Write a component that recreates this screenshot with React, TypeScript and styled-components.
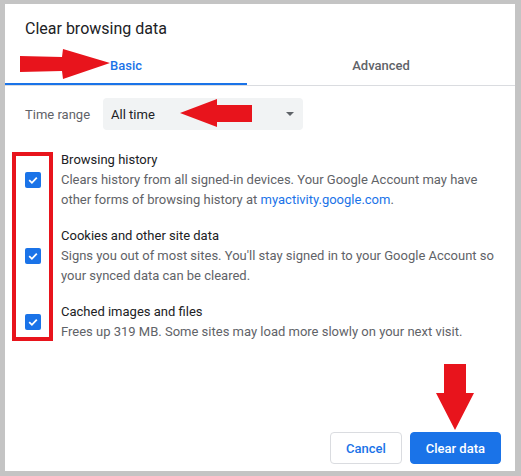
import React from "react";
import styled, { createGlobalStyle } from "styled-components";

const GlobalStyle = createGlobalStyle`
  html, body {
    margin: 0;
    padding: 0;
    background: #c4c4c4;
  }
  body {
    font-family: Roboto, "Liberation Sans", sans-serif;
  }
`;

const Frame = styled.div`
  position: relative;
  width: 521px;
  height: 476px;
  box-sizing: border-box;
  padding: 4px 6px 5px 5px;
  background: #c4c4c4;
`;

const Dialog = styled.div`
  height: 100%;
  background: #fff;
  display: flex;
  flex-direction: column;
`;

const Title = styled.h1`
  margin: 0;
  padding: 15px 20px 0;
  font-size: 16px;
  line-height: 20px;
  font-weight: 400;
  color: #202124;
`;

const TabBar = styled.div`
  display: flex;
  margin-top: 6px;
  border-bottom: 1px solid #dadce0;
`;

const Tab = styled.div<{ $active?: boolean }>`
  flex: ${(p) => (p.$active ? "0 0 242px" : "1")};
  height: 40px;
  box-sizing: border-box;
  display: flex;
  align-items: center;
  justify-content: center;
  font-size: 13px;
  font-weight: 500;
  color: ${(p) => (p.$active ? "#1a73e8" : "#5f6368")};
  border-bottom: 2px solid ${(p) => (p.$active ? "#1a73e8" : "transparent")};
  padding-top: 2px;
`;

const Body = styled.div`
  padding: 12px 20px 0;
`;

const RangeRow = styled.div`
  display: flex;
  align-items: center;
  gap: 13px;
`;

const Label = styled.span`
  font-size: 13px;
  color: #5f6368;
`;

const Select = styled.div`
  width: 200px;
  height: 32px;
  box-sizing: border-box;
  display: flex;
  align-items: center;
  justify-content: space-between;
  padding: 0 9px 0 8px;
  background: #f1f3f4;
  border-radius: 4px;
  font-size: 13px;
  color: #202124;
`;

const Caret = styled.span`
  width: 0;
  height: 0;
  border-left: 4px solid transparent;
  border-right: 4px solid transparent;
  border-top: 4px solid #5f6368;
`;

const List = styled.div`
  margin-top: 12px;
  display: flex;
  flex-direction: column;
`;

const Item = styled.div`
  display: flex;
  align-items: center;
  gap: 20px;
  padding: 8px 0;
`;

const Check = styled.span`
  flex: none;
  width: 16px;
  height: 16px;
  border-radius: 2px;
  background: #1a73e8;
  display: flex;
  align-items: center;
  justify-content: center;
`;

const ItemText = styled.div`
  font-size: 13px;
  line-height: 20px;
`;

const ItemTitle = styled.div`
  color: #202124;
`;

const ItemDesc = styled.div`
  color: #5f6368;
`;

const Link = styled.a`
  color: #1a73e8;
  text-decoration: none;
`;

const Footer = styled.div`
  margin-top: auto;
  display: flex;
  justify-content: flex-end;
  gap: 8px;
  padding: 0 14px 7px 0;
`;

const Button = styled.button<{ $primary?: boolean }>`
  height: 32px;
  padding: 0 15px;
  border-radius: 4px;
  font-family: inherit;
  font-size: 13px;
  font-weight: 500;
  cursor: pointer;
  border: 1px solid ${(p) => (p.$primary ? "#1a73e8" : "#dadce0")};
  background: ${(p) => (p.$primary ? "#1a73e8" : "#fff")};
  color: ${(p) => (p.$primary ? "#fff" : "#1a73e8")};
`;

const Annotations = styled.svg`
  position: absolute;
  left: 0;
  top: 0;
  pointer-events: none;
`;

const CheckMark = () => (
  <svg width="12" height="12" viewBox="0 0 12 12">
    <path d="M2.2 6.2 L4.9 8.8 L9.8 3.6" fill="none" stroke="#fff" strokeWidth="1.8" />
  </svg>
);

const items = [
  {
    title: "Browsing history",
    desc: (
      <>
        Clears history from all signed-in devices. Your Google Account may have other forms of
        browsing history at <Link href="#">myactivity.google.com</Link>.
      </>
    ),
  },
  {
    title: "Cookies and other site data",
    desc: "Signs you out of most sites. You'll stay signed in to your Google Account so your synced data can be cleared.",
  },
  {
    title: "Cached images and files",
    desc: "Frees up 319 MB. Some sites may load more slowly on your next visit.",
  },
];

export default function App() {
  return (
    <>
      <GlobalStyle />
      <Frame>
        <Dialog>
          <Title>Clear browsing data</Title>
          <TabBar>
            <Tab $active>Basic</Tab>
            <Tab>Advanced</Tab>
          </TabBar>
          <Body>
            <RangeRow>
              <Label>Time range</Label>
              <Select>
                All time
                <Caret />
              </Select>
            </RangeRow>
            <List>
              {items.map((it) => (
                <Item key={it.title}>
                  <Check>
                    <CheckMark />
                  </Check>
                  <ItemText>
                    <ItemTitle>{it.title}</ItemTitle>
                    <ItemDesc>{it.desc}</ItemDesc>
                  </ItemText>
                </Item>
              ))}
            </List>
          </Body>
          <Footer>
            <Button>Cancel</Button>
            <Button $primary>Clear data</Button>
          </Footer>
        </Dialog>
        <Annotations width="521" height="476" viewBox="0 0 521 476">
          <g fill="#e8141c">
            <polygon points="20,56 62,57 63,49 110,63 63,79 62,71 20,72" />
            <polygon points="180,113 217,99 217,105 252,105 252,122 217,122 217,127" />
            <polygon points="444,364 466,364 466,393 474,393 455,430 436,393 444,393" />
          </g>
          <rect x="14" y="154" width="37" height="185" fill="none" stroke="#e8141c" strokeWidth="4" />
        </Annotations>
      </Frame>
    </>
  );
}
